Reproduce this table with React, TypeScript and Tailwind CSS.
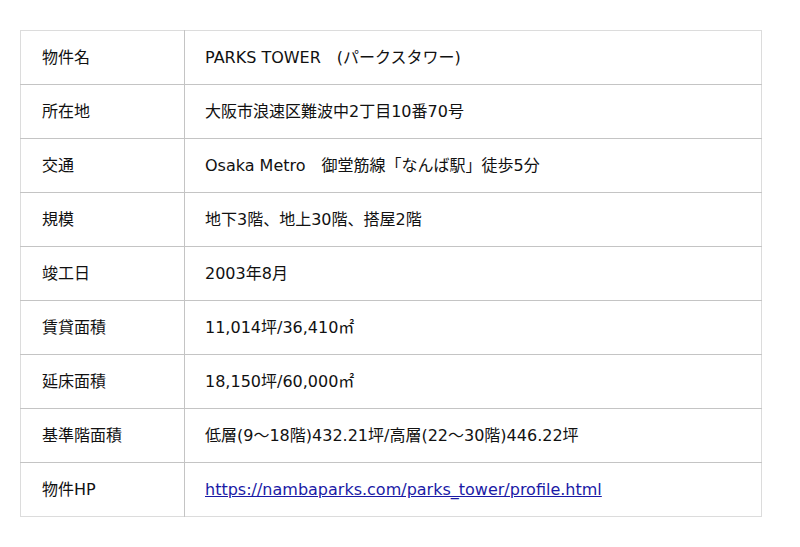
const rows: [string, string][] = [
  ["物件名", "PARKS TOWER　(パークスタワー)"],
  ["所在地", "大阪市浪速区難波中2丁目10番70号"],
  ["交通", "Osaka Metro　御堂筋線「なんば駅」徒歩5分"],
  ["規模", "地下3階、地上30階、搭屋2階"],
  ["竣工日", "2003年8月"],
  ["賃貸面積", "11,014坪/36,410㎡"],
  ["延床面積", "18,150坪/60,000㎡"],
  ["基準階面積", "低層(9～18階)432.21坪/高層(22～30階)446.22坪"],
];

export default function App() {
  return (
    <div className="min-h-[547px] bg-white px-5 pt-[30px] font-['DejaVu_Sans','Noto_Sans_CJK_JP',sans-serif] text-[16px] text-[#111]">
      <table className="w-[742px] border-collapse border border-[#dcdcdc]">
        <tbody>
          {rows.map(([label, value]) => (
            <tr key={label} className="h-[54px] border-b border-[#c4c4c4]">
              <td className="w-[164px] border-r border-[#c4c4c4] pl-[21px] align-middle">
                {label}
              </td>
              <td className="pl-5 align-middle">{value}</td>
            </tr>
          ))}
          <tr className="h-[54px]">
            <td className="w-[164px] border-r border-[#c4c4c4] pl-[21px] align-middle">
              物件HP
            </td>
            <td className="pl-5 align-middle">
              <a
                href="https://nambaparks.com/parks_tower/profile.html"
                className="text-[#1a1aa6] underline"
              >
                https://nambaparks.com/parks_tower/profile.html
              </a>
            </td>
          </tr>
        </tbody>
      </table>
    </div>
  );
}
